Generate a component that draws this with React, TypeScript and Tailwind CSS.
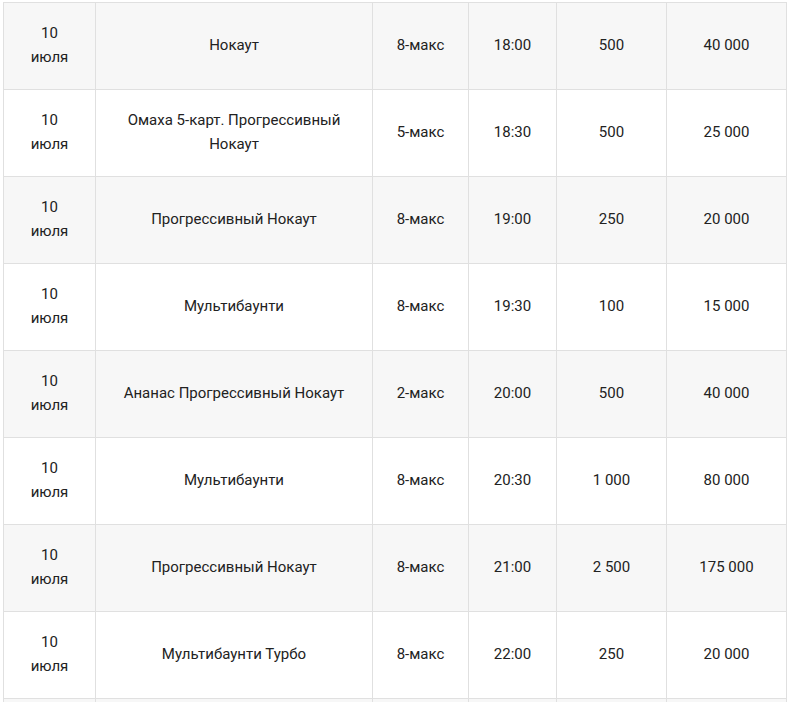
const rows = [
  ["Нокаут", "8-макс", "18:00", "500", "40 000"],
  ["Омаха 5-карт. Прогрессивный Нокаут", "5-макс", "18:30", "500", "25 000"],
  ["Прогрессивный Нокаут", "8-макс", "19:00", "250", "20 000"],
  ["Мультибаунти", "8-макс", "19:30", "100", "15 000"],
  ["Ананас Прогрессивный Нокаут", "2-макс", "20:00", "500", "40 000"],
  ["Мультибаунти", "8-макс", "20:30", "1 000", "80 000"],
  ["Прогрессивный Нокаут", "8-макс", "21:00", "2 500", "175 000"],
  ["Мультибаунти Турбо", "8-макс", "22:00", "250", "20 000"],
];

const cell = "border border-[#e0e0e0] text-center align-middle";

export default function App() {
  return (
    <div
      className="bg-white pl-[3px] pt-[2px] w-[790px] h-[702px] overflow-hidden text-[15px] leading-6 text-[#222]"
      style={{ fontFamily: "Roboto, 'Noto Sans', sans-serif" }}
    >
      <table className="table-fixed border-collapse w-[783px]">
        <colgroup>
          <col className="w-[92px]" />
          <col className="w-[277px]" />
          <col className="w-[96px]" />
          <col className="w-[88px]" />
          <col className="w-[110px]" />
          <col className="w-[120px]" />
        </colgroup>
        <tbody>
          {rows.map((r, i) => (
            <tr key={i} className={i % 2 === 0 ? "bg-[#f7f7f7] h-[87px]" : "bg-white h-[87px]"}>
              <td className={cell + " pb-[2px]"}>
                10
                <br />
                июля
              </td>
              <td className={cell + " px-6 pb-[2px]"}>{r[0]}</td>
              <td className={cell + " pb-[2px]"}>{r[1]}</td>
              <td className={cell + " pb-[2px]"}>{r[2]}</td>
              <td className={cell + " pb-[2px]"}>{r[3]}</td>
              <td className={cell + " pb-[2px]"}>{r[4]}</td>
            </tr>
          ))}
          {/* next row, only its top edge shows */}
          <tr className="bg-[#f7f7f7] h-[87px]">
            <td className={cell}></td>
            <td className={cell}></td>
            <td className={cell}></td>
            <td className={cell}></td>
            <td className={cell}></td>
            <td className={cell}></td>
          </tr>
        </tbody>
      </table>
    </div>
  );
}
